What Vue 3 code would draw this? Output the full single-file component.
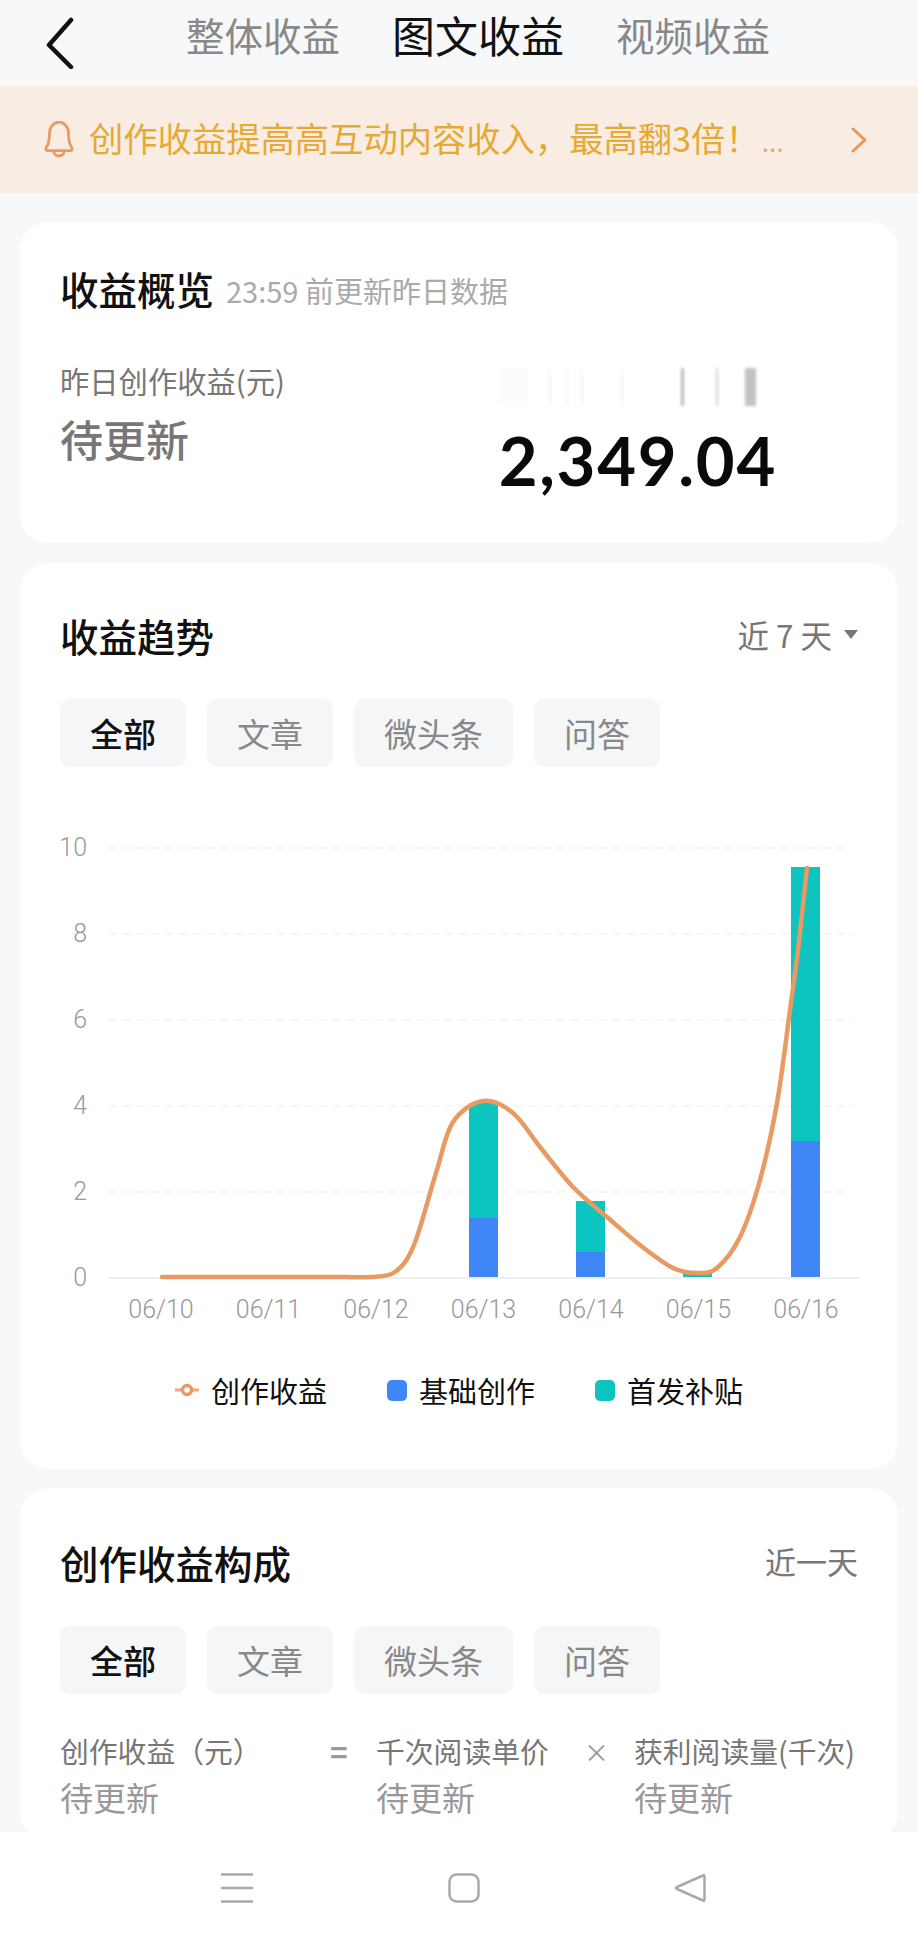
<template>
  <div class="page">
    <div class="scroll">
      <div class="topbar">
        <svg class="back" width="30" height="52" viewBox="0 0 30 52">
          <path d="M26 3 L4 28 L26 50" fill="none" stroke="#111" stroke-width="4.5" stroke-linecap="round" stroke-linejoin="round" />
        </svg>
        <div class="top-tabs">
          <span>整体收益</span>
          <span class="on">图文收益</span>
          <span>视频收益</span>
        </div>
      </div>

      <div class="notice">
        <svg width="34" height="38" viewBox="3 2 28 36">
          <path d="M5 27 C7 24 8 20 8 14 C8 8 12 3 17 3 C22 3 26 8 26 14 C26 20 27 24 29 27 C30 29 29 30 28 30 L6 30 C5 30 4 29 5 27 Z" fill="none" stroke="#e89a62" stroke-width="2.6" stroke-linejoin="round" />
          <path d="M12 31 C13 36.5 21 36.5 22 31" fill="none" stroke="#e89a62" stroke-width="2.6" />
        </svg>
        <span class="notice-text">创作收益提高高互动内容收入，最高翻3倍！<em>...</em></span>
        <svg class="notice-arrow" width="18" height="28" viewBox="0 0 18 28">
          <path d="M3 3 L15 14 L3 25" fill="none" stroke="#e8975a" stroke-width="3" stroke-linecap="round" stroke-linejoin="round" />
        </svg>
      </div>

      <section class="card overview">
        <div class="ov-head">
          <h2>收益概览</h2>
          <span class="ov-sub">23:59 前更新昨日数据</span>
        </div>
        <div class="ov-body">
          <div>
            <div class="ov-label">昨日创作收益(元)</div>
            <div class="ov-value">待更新</div>
          </div>
          <div class="ov-amount">2,349.04</div>
        </div>
        <div class="smudge">
          <i v-for="s in smudges" :key="s.x" :style="{ left: s.x + 'px', width: s.w + 'px', opacity: s.o }"></i>
        </div>
      </section>

      <section class="card trend">
        <div class="card-head">
          <h2>收益趋势</h2>
          <span class="range">近 7 天<b class="caret"></b></span>
        </div>
        <div class="chips">
          <span v-for="(t, i) in chips" :key="t" class="chip" :class="{ on: i === 0 }">{{ t }}</span>
        </div>
        <svg class="chart" width="878" height="510" viewBox="20 830 878 510">
          <line v-for="g in grid" :key="g.label" x1="108" x2="852" :y1="g.y" :y2="g.y" stroke="#f3f3f3" stroke-width="1.5" stroke-dasharray="9 5" />
          <line x1="108" x2="860" y1="1278" y2="1278" stroke="#efefef" stroke-width="2" />
          <text v-for="g in grid" :key="'l' + g.label" x="87" :y="g.y + 8" text-anchor="end" class="tick">{{ g.label }}</text>
          <g v-for="b in bars" :key="b.x">
            <rect :x="b.x" :y="b.top" width="29" :height="b.split - b.top" fill="#0cc5c0" />
            <rect :x="b.x" :y="b.split" width="29" :height="1277 - b.split" fill="#4086f7" />
          </g>
          <path :d="curve" fill="none" stroke="#e89a62" stroke-width="4.5" stroke-linecap="round" stroke-linejoin="round" />
          <text v-for="d in days" :key="d.t" :x="d.x" y="1318" text-anchor="middle" class="tick">{{ d.t }}</text>
        </svg>
        <div class="legend">
          <span class="lg">
            <svg width="24" height="16" viewBox="0 0 24 16">
              <path d="M0 8H24" stroke="#e9a77c" stroke-width="3" />
              <circle cx="12" cy="8" r="4.5" fill="#fff" stroke="#e89a62" stroke-width="3.5" />
            </svg>
            创作收益
          </span>
          <span class="lg"><i class="sq blue"></i>基础创作</span>
          <span class="lg"><i class="sq teal"></i>首发补贴</span>
        </div>
      </section>

      <section class="card compose">
        <div class="card-head">
          <h2>创作收益构成</h2>
          <span class="range">近一天</span>
        </div>
        <div class="chips">
          <span v-for="(t, i) in chips" :key="t" class="chip" :class="{ on: i === 0 }">{{ t }}</span>
        </div>
        <div class="formula">
          <div class="fcol c1"><div class="flabel">创作收益（元）</div><div class="fvalue">待更新</div></div>
          <div class="op eq">=</div>
          <div class="fcol c2"><div class="flabel">千次阅读单价</div><div class="fvalue">待更新</div></div>
          <div class="op times">×</div>
          <div class="fcol c3"><div class="flabel">获利阅读量(千次)</div><div class="fvalue">待更新</div></div>
        </div>
      </section>
    </div>

    <div class="navbar">
      <svg width="34" height="30" viewBox="0 0 34 30">
        <path d="M1 1.5H33M1 15H33M1 28.5H33" stroke="#aaa" stroke-width="2.5" />
      </svg>
      <svg width="32" height="30" viewBox="0 0 32 30">
        <rect x="1.5" y="1.5" width="29" height="27" rx="7" fill="none" stroke="#aaa" stroke-width="2.5" />
      </svg>
      <svg width="32" height="30" viewBox="0 0 32 30">
        <path d="M29 2.5 C30 2 30.5 2.5 30.5 3.5 V26.5 C30.5 27.5 30 28 29 27.5 L3 16 C1.5 15.3 1.5 14.7 3 14 Z" fill="none" stroke="#aaa" stroke-width="2.5" stroke-linejoin="round" />
      </svg>
    </div>
  </div>
</template>

<script setup>
const chips = ['全部', '文章', '微头条', '问答']

const grid = [
  { label: '10', y: 848 },
  { label: '8', y: 934 },
  { label: '6', y: 1020 },
  { label: '4', y: 1106 },
  { label: '2', y: 1192 },
  { label: '0', y: 1278 }
]

const days = ['06/10', '06/11', '06/12', '06/13', '06/14', '06/15', '06/16'].map((t, i) => ({
  t,
  x: 161 + i * 107.5
}))

const bars = [
  { x: 469, top: 1103, split: 1218 },
  { x: 576, top: 1201, split: 1252 },
  { x: 683, top: 1273, split: 1277 },
  { x: 791, top: 867, split: 1141 }
]

const points = [
  [162, 1277], [320, 1277], [345, 1277], [370, 1277], [395, 1272], [414, 1245], [436, 1173], [453, 1122],
  [483, 1101], [513, 1113], [540, 1147], [573, 1187], [607, 1217], [640, 1245], [673, 1268], [697, 1273],
  [717, 1268], [740, 1237], [760, 1180], [777, 1103], [790, 1010], [798, 950], [807, 868]
]

// catmull-rom through the traced points
const curve = points.reduce((d, p, i) => {
  if (i === 0) return `M${p[0]} ${p[1]}`
  const p0 = points[i - 2] || points[i - 1]
  const p1 = points[i - 1]
  const p3 = points[i + 1] || p
  const c1x = p1[0] + (p[0] - p0[0]) / 6
  const c1y = p1[1] + (p[1] - p0[1]) / 6
  const c2x = p[0] - (p3[0] - p1[0]) / 6
  const c2y = p[1] - (p3[1] - p1[1]) / 6
  return `${d} C${c1x} ${c1y} ${c2x} ${c2y} ${p[0]} ${p[1]}`
}, '')

// the blurred patch above the amount
const smudges = [
  { x: 0, w: 30, o: 0.02 },
  { x: 50, w: 4, o: 0.03 },
  { x: 66, w: 5, o: 0.03 },
  { x: 82, w: 4, o: 0.03 },
  { x: 122, w: 4, o: 0.04 },
  { x: 183, w: 3, o: 0.45 },
  { x: 218, w: 2, o: 0.3 },
  { x: 247, w: 11, o: 0.4 }
]
</script>

<style>
html, body {
  margin: 0;
  background: #f6f8fa;
}
</style>

<style scoped>
.page {
  width: 918px;
  height: 1944px;
  display: flex;
  flex-direction: column;
  background: #f6f8fa;
  font-family: "Noto Sans CJK SC", "Noto Sans", sans-serif;
  overflow: hidden;
}

.scroll {
  flex: 1;
  min-height: 0;
  overflow: hidden;
}

.topbar {
  height: 86px;
  position: relative;
  display: flex;
  justify-content: center;
}

.back {
  position: absolute;
  left: 45px;
  top: 17px;
}

.top-tabs {
  display: flex;
  align-items: center;
  gap: 52px;
  height: 68px;
  margin-left: 38px;
  font-size: 38.5px;
  color: #888;
}

.top-tabs .on {
  font-size: 43px;
  color: #111;
}

.notice {
  height: 107px;
  background: #f9ede3;
  display: flex;
  align-items: center;
  padding: 0 50px 0 42px;
}

.notice-text {
  flex: 1;
  margin: -6px 0 0 13px;
  font-size: 34.3px;
  color: #e6a934;
  white-space: nowrap;
}

.notice-text em {
  font-style: normal;
  font-size: 26px;
  color: #dcae74;
  margin-left: 2px;
}

.card {
  position: relative;
  background: #fff;
  border-radius: 28px;
  margin: 20px 20px 0;
  padding: 0 40px;
}

.card h2 {
  margin: 0;
  font-size: 38.5px;
  font-weight: 500;
  color: #111;
  line-height: 56px;
}

.overview {
  margin-top: 29px;
  height: 321px;
  padding-top: 38px;
  box-sizing: border-box;
}

.ov-head {
  display: flex;
  align-items: center;
  gap: 12px;
}

.ov-sub {
  font-size: 29px;
  color: #aaa;
  margin-top: 4px;
}

.ov-body {
  display: flex;
  justify-content: space-between;
  margin-top: 43px;
}

.ov-label {
  font-size: 29.3px;
  color: #777;
  line-height: 42px;
}

.ov-value {
  font-size: 43px;
  font-weight: 500;
  color: #777;
  line-height: 62px;
  margin-top: 6px;
}

.ov-amount {
  font-family: Lato, Inter, sans-serif;
  font-size: 67px;
  font-weight: 700;
  letter-spacing: 1.7px;
  color: #0a0a0a;
  line-height: 78px;
  margin: 62px 81px 0 0;
}

.smudge {
  position: absolute;
  left: 478px;
  top: 146px;
  width: 262px;
  height: 38px;
  filter: blur(1.5px);
}

.smudge i {
  position: absolute;
  top: 0;
  bottom: 0;
  background: #666;
}

.trend {
  height: 906px;
  padding-top: 44px;
  box-sizing: border-box;
}

.card-head {
  display: flex;
  justify-content: space-between;
  align-items: flex-start;
}

.range {
  display: flex;
  align-items: center;
  font-size: 31.5px;
  color: #777;
  line-height: 50px;
  margin-top: 2px;
}

.caret {
  width: 0;
  height: 0;
  margin-left: 12px;
  border-left: 7px solid transparent;
  border-right: 7px solid transparent;
  border-top: 9px solid #777;
}

.chips {
  display: flex;
  gap: 21px;
  margin-top: 36px;
}

.chip {
  height: 68px;
  padding: 0 30px;
  display: flex;
  align-items: center;
  border-radius: 10px;
  background: #f5f6f8;
  font-size: 33px;
  color: #888;
}

.chip.on {
  color: #111;
  font-weight: 500;
}

.chart {
  display: block;
  margin: 63px -40px 0;
}

.tick {
  font-family: Roboto, sans-serif;
  font-size: 25px;
  font-weight: 300;
  fill: #999;
}

.legend {
  display: flex;
  justify-content: center;
  gap: 60px;
  margin-top: 29px;
}

.lg {
  display: flex;
  align-items: center;
  gap: 12px;
  font-size: 29px;
  line-height: 42px;
  color: #111;
}

.sq {
  width: 20px;
  height: 21px;
  border-radius: 5px;
}

.blue {
  background: #4086f7;
}

.teal {
  background: #0cc5c0;
}

.compose {
  margin-top: 19px;
  padding-top: 46px;
}

.compose .range {
  font-size: 31px;
}

.compose .chips {
  margin-top: 36px;
}

.formula {
  position: relative;
  display: flex;
  margin-top: 36px;
  height: 110px;
}

.flabel {
  font-size: 28.8px;
  line-height: 42px;
  color: #777;
  white-space: nowrap;
}

.fvalue {
  font-size: 33px;
  line-height: 50px;
  color: #999;
}

.c1 {
  width: 270px;
}

.eq {
  width: 46px;
  font-size: 30px;
  font-weight: 700;
}

.c2 {
  width: 213px;
}

.times {
  width: 50px;
  margin-left: -5px;
  font-size: 25px;
}

.op {
  line-height: 42px;
  color: #999;
}

.navbar {
  height: 112px;
  background: #fff;
  display: flex;
  align-items: center;
  justify-content: center;
  gap: 194px;
  padding-left: 8px;
  flex-shrink: 0;
}
</style>
